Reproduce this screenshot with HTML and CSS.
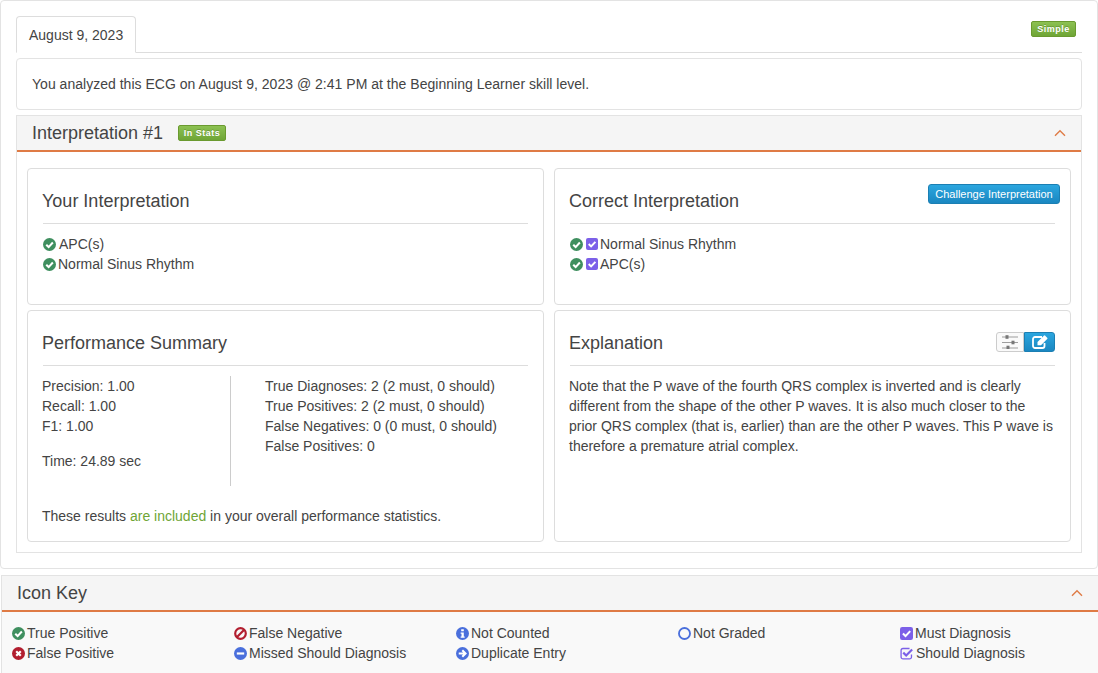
FILE: index.html
```html
<!DOCTYPE html>
<html lang="en">
<head>
<meta charset="utf-8">
<title>ECG Interpretation</title>
<link rel="stylesheet" href="styles.css">
</head>
<body>
<svg class="defs" width="0" height="0" aria-hidden="true">
  <symbol id="i-check" viewBox="0 0 12 12"><circle cx="6" cy="6" r="6" fill="currentColor"/><path d="M3 6.200 5.200 8.400 9.100 4.200" fill="none" stroke="#fff" stroke-width="1.900"/></symbol>
  <symbol id="i-times" viewBox="0 0 12 12"><circle cx="6" cy="6" r="6" fill="currentColor"/><path d="M3.900 3.900 8.100 8.100M8.100 3.900 3.900 8.100" fill="none" stroke="#fff" stroke-width="2"/></symbol>
  <symbol id="i-ban" viewBox="0 0 12 12"><circle cx="6" cy="6" r="4.900" fill="none" stroke="currentColor" stroke-width="2"/><path d="M2.600 9.400 9.400 2.600" stroke="currentColor" stroke-width="2"/></symbol>
  <symbol id="i-minus" viewBox="0 0 12 12"><circle cx="6" cy="6" r="6" fill="currentColor"/><rect x="2.600" y="5" width="6.800" height="2" fill="#fff"/></symbol>
  <symbol id="i-info" viewBox="0 0 12 12"><circle cx="6" cy="6" r="6" fill="currentColor"/><path d="M4.800 2h2.400v2H4.800zM4.300 5h2.900v3.800h.8V10H4.300V8.800h.8V6.200h-.8z" fill="#fff"/></symbol>
  <symbol id="i-arrow" viewBox="0 0 12 12"><circle cx="6" cy="6" r="6" fill="currentColor"/><path d="M2.500 6h6M5.800 3 8.800 6 5.800 9" fill="none" stroke="#fff" stroke-width="1.900"/></symbol>
  <symbol id="i-ring" viewBox="0 0 12 12"><circle cx="6" cy="6" r="5.100" fill="none" stroke="currentColor" stroke-width="1.700"/></symbol>
  <symbol id="i-square" viewBox="0 0 12 12"><rect width="12" height="12" rx="2" fill="currentColor"/><path d="M2.700 6 5.100 8.400 9.400 3.800" fill="none" stroke="#fff" stroke-width="1.900"/></symbol>
  <symbol id="i-square-o" viewBox="0 0 12 12"><path d="M10.600 7v2.200a1.800 1.800 0 0 1-1.800 1.800H2.800A1.800 1.800 0 0 1 1 9.200V3.200a1.800 1.800 0 0 1 1.800-1.800h6" fill="none" stroke="currentColor" stroke-width="1.200"/><path d="M3 5.200 5.700 7.900 11.200 2.200" fill="none" stroke="currentColor" stroke-width="2"/></symbol>
  <symbol id="i-up" viewBox="0 0 12 8"><path d="M1 6.800 6 1.800 11 6.800" fill="none" stroke="currentColor" stroke-width="1.400"/></symbol>
  <symbol id="i-sliders" viewBox="0 0 16 14"><path d="M0 2h16M0 7.500h16M0 13h16" stroke="currentColor" stroke-width="1" opacity=".7"/><rect x="3.500" y=".2" width="3" height="3.600" fill="currentColor"/><rect x="9.500" y="5.700" width="3" height="3.600" fill="currentColor"/><rect x="4.500" y="10.700" width="3" height="3.300" fill="currentColor"/></symbol>
  <symbol id="i-edit" viewBox="0 0 16 14"><path d="M12.500 8v3a2 2 0 0 1-2 2H3a2 2 0 0 1-2-2V4a2 2 0 0 1 2-2h7" fill="none" stroke="currentColor" stroke-width="1.800"/><path d="M5.500 7 11.800.7a1 1 0 0 1 1.400 0l2 2a1 1 0 0 1 0 1.400L9 10.300H5.500z" fill="currentColor"/></symbol>
</svg>

<main class="main">
  <div class="tabs">
    <div class="tab">August 9, 2023</div>
    <span class="badge badge-simple">Simple</span>
  </div>
  <div class="well">You analyzed this ECG on August 9, 2023 @ 2:41 PM at the Beginning Learner skill level.</div>

  <section class="panel">
    <header class="panel-head">
      <div class="panel-title-group">
        <h2 class="panel-title">Interpretation #1</h2>
        <span class="badge badge-stats">In Stats</span>
      </div>
      <svg class="chevron"><use href="#i-up"/></svg>
    </header>
    <div class="panel-grid">
      <article class="card">
        <div class="card-head"><h3 class="card-title">Your Interpretation</h3></div>
        <ul class="dx-list">
          <li class="dx"><svg class="ic green"><use href="#i-check"/></svg><span class="after-1">APC(s)</span></li>
          <li class="dx"><svg class="ic green"><use href="#i-check"/></svg><span>Normal Sinus Rhythm</span></li>
        </ul>
      </article>
      <article class="card">
        <div class="card-head">
          <h3 class="card-title">Correct Interpretation</h3>
          <button class="btn-challenge" type="button">Challenge Interpretation</button>
        </div>
        <ul class="dx-list">
          <li class="dx"><svg class="ic green"><use href="#i-check"/></svg><svg class="ic purple gap-l"><use href="#i-square"/></svg><span>Normal Sinus Rhythm</span></li>
          <li class="dx"><svg class="ic green"><use href="#i-check"/></svg><svg class="ic purple gap-l"><use href="#i-square"/></svg><span>APC(s)</span></li>
        </ul>
      </article>
      <article class="card">
        <div class="card-head"><h3 class="card-title">Performance Summary</h3></div>
        <div class="perf">
          <div class="perf-left">
            <div>Precision: 1.00</div>
            <div>Recall: 1.00</div>
            <div>F1: 1.00</div>
            <div class="perf-time">Time: 24.89 sec</div>
          </div>
          <div class="perf-right">
            <div>True Diagnoses: 2 (2 must, 0 should)</div>
            <div>True Positives: 2 (2 must, 0 should)</div>
            <div>False Negatives: 0 (0 must, 0 should)</div>
            <div>False Positives: 0</div>
          </div>
        </div>
        <p class="perf-note">These results <span class="included">are included</span> in your overall performance statistics.</p>
      </article>
      <article class="card">
        <div class="card-head">
          <h3 class="card-title">Explanation</h3>
          <div class="btn-group">
            <button class="btn-icon btn-light" type="button" aria-label="Settings"><svg class="btn-svg"><use href="#i-sliders"/></svg></button>
            <button class="btn-icon btn-blue" type="button" aria-label="Edit"><svg class="btn-svg"><use href="#i-edit"/></svg></button>
          </div>
        </div>
        <p class="explain">Note that the P wave of the fourth QRS complex is inverted and is clearly different from the shape of the other P waves. It is also much closer to the prior QRS complex (that is, earlier) than are the other P waves. This P wave is therefore a premature atrial complex.</p>
      </article>
    </div>
  </section>
</main>

<section class="key">
  <header class="key-head">
    <h2 class="panel-title">Icon Key</h2>
    <svg class="chevron"><use href="#i-up"/></svg>
  </header>
  <div class="key-grid">
    <div class="dx"><svg class="ic green"><use href="#i-check"/></svg><span>True Positive</span></div>
    <div class="dx"><svg class="ic red"><use href="#i-ban"/></svg><span>False Negative</span></div>
    <div class="dx"><svg class="ic blue"><use href="#i-info"/></svg><span>Not Counted</span></div>
    <div class="dx"><svg class="ic blue"><use href="#i-ring"/></svg><span>Not Graded</span></div>
    <div class="dx"><svg class="ic purple"><use href="#i-square"/></svg><span>Must Diagnosis</span></div>
    <div class="dx"><svg class="ic red"><use href="#i-times"/></svg><span>False Positive</span></div>
    <div class="dx"><svg class="ic blue"><use href="#i-minus"/></svg><span>Missed Should Diagnosis</span></div>
    <div class="dx"><svg class="ic blue"><use href="#i-arrow"/></svg><span>Duplicate Entry</span></div>
    <div class="dx"></div>
    <div class="dx"><svg class="ic purple"><use href="#i-square-o"/></svg><span class="after-1">Should Diagnosis</span></div>
  </div>
</section>
</body>
</html>
```

FILE: styles.css
```css
* { box-sizing: border-box; }
html, body { margin: 0; padding: 0; }
body {
  width: 1098px;
  height: 673px;
  overflow: hidden;
  background: #fff;
  color: #444;
  font-family: "Liberation Sans", Arial, sans-serif;
  font-size: 14px;
  line-height: 20px;
}
.defs { position: absolute; }
h2, h3, p, ul { margin: 0; padding: 0; }
ul { list-style: none; }

.main {
  height: 569px;
  padding: 15px;
  border: 1px solid #e3e3e3;
  border-radius: 4px;
}
.tabs {
  display: flex;
  justify-content: space-between;
  height: 37px;
  padding-right: 6px;
  border-bottom: 1px solid #ddd;
}
.tab {
  width: 120px;
  height: 37px;
  padding: 8px 0 0 12px;
  background: #fff;
  border: 1px solid #ddd;
  border-bottom-color: #fff;
  border-radius: 4px 4px 0 0;
  color: #444;
}
.badge {
  display: inline-block;
  height: 16px;
  border: 1px solid #6a9a2f;
  border-radius: 2px;
  background: linear-gradient(#8cc152, #6fa536);
  color: #fff;
  font-size: 9px;
  font-weight: 700;
  line-height: 14px;
  text-align: center;
  letter-spacing: .5px;
  text-shadow: 0 -1px 0 rgba(0, 0, 0, .2);
}
.badge-simple { width: 45px; margin-top: 5px; }
.badge-stats { width: 48px; }

.well {
  height: 52px;
  margin-top: 5px;
  padding: 15px;
  border: 1px solid #e3e3e3;
  border-radius: 4px;
  letter-spacing: .02px;
}

.panel {
  height: 438px;
  margin-top: 5px;
  border: 1px solid #e3e3e3;
  border-top: 0;
}
.panel-head, .key-head {
  display: flex;
  justify-content: space-between;
  align-items: center;
  height: 37px;
  background: #f5f5f5;
  border-top: 1px solid #e3e3e3;
  border-bottom: 2px solid #df7b45;
}
.panel-head { padding: 0 15px; }
.panel-title-group { display: flex; align-items: center; gap: 15px; }
.panel-title {
  font-size: 18px;
  font-weight: 400;
  line-height: 34px;
  color: #444;
}
.chevron { width: 12px; height: 8px; color: #df7b45; }

.panel-grid {
  display: grid;
  grid-template-columns: 517px 517px;
  grid-template-rows: 137px 232px;
  gap: 5px 10px;
  padding: 16px 10px 10px;
}
.card {
  display: flex;
  flex-direction: column;
  padding: 15px 15px 15px 14px;
  border: 1px solid #ddd;
  border-radius: 4px;
}
.card-head {
  display: flex;
  justify-content: space-between;
  align-items: flex-start;
  height: 40px;
  margin-left: 1px;
  border-bottom: 1px solid #ddd;
}
.card-title {
  margin-left: -1px;
  font-size: 18px;
  font-weight: 400;
  line-height: 34px;
  color: #444;
}
.btn-challenge {
  width: 132px;
  height: 20px;
  margin-right: -5px;
  padding: 0;
  border: 1px solid #1b7fb3;
  border-radius: 3px;
  background: linear-gradient(#2ba6df, #1a87c1);
  color: #fff;
  font-family: inherit;
  font-size: 11px;
  line-height: 18px;
}
.dx-list { margin: 10px 0 0 1px; }
.dx { display: flex; align-items: center; height: 20px; white-space: nowrap; }
.ic { flex: none; width: 13px; height: 13px; margin-right: 2px; }
.gap-l { width: 12px; height: 12px; margin-left: 1px; }
.after-1 { margin-left: 1px; }
.green { color: #3f8f5f; }
.red { color: #b21e2f; }
.blue { color: #4a6fdc; }
.purple { color: #7c60e8; }

.perf { display: flex; margin-top: 10px; }
.perf-left { width: 189px; height: 110px; border-right: 1px solid #ccc; }
.perf-time { margin-top: 15px; }
.perf-right { margin-left: 34px; }
.perf-note { margin-top: 20px; }
.included { color: #6fa536; }

.btn-group { display: flex; margin-top: 6px; }
.btn-icon {
  display: flex;
  align-items: center;
  justify-content: center;
  width: 28px;
  height: 20px;
  padding: 0;
}
.btn-light {
  border: 1px solid #ccc;
  border-radius: 3px 0 0 3px;
  background: #fafafa;
  color: #777;
}
.btn-blue {
  width: 31px;
  border: 1px solid #1b7fb3;
  border-radius: 0 3px 3px 0;
  background: linear-gradient(#2ba6df, #1a87c1);
  color: #fff;
}
.btn-svg { width: 16px; height: 14px; }
.explain { margin-top: 10px; }

.key {
  height: 98px;
  margin: 6px 0 0 1px;
  background: #f9f9f9;
  border-left: 1px solid #e3e3e3;
}
.key-head { padding: 0 15px; }
.key-grid {
  display: grid;
  grid-template-columns: repeat(5, 222px);
  grid-auto-rows: 20px;
  padding: 11px 0 0 10px;
}
```
